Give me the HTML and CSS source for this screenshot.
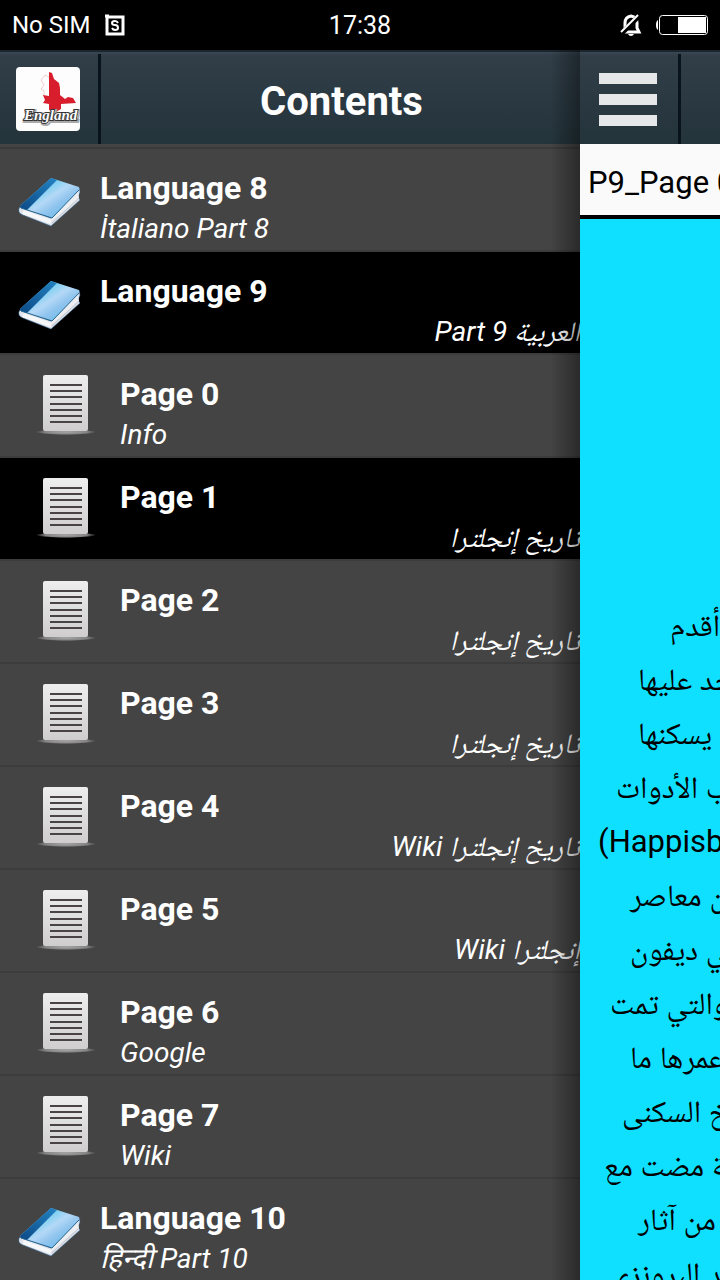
FILE: index.html
```html
<!DOCTYPE html>
<html lang="en">
<head>
    <meta charset="utf-8">
    <meta name="viewport" content="width=device-width,initial-scale=1.0">
    <title>Contents</title>
    <link rel="stylesheet" href="styles.css">
</head>
<body>

<!-- icons -->
<svg class="defs" width="0" height="0" aria-hidden="true">
    <defs>
        <linearGradient id="cover" x1="0" y1="0" x2="1" y2="1">
            <stop offset="0.1" stop-color="#3fa9e0"/>
            <stop offset="0.35" stop-color="#7fd0f2"/>
            <stop offset="0.5" stop-color="#b4d8f6"/>
            <stop offset="0.65" stop-color="#8fc4ee"/>
            <stop offset="1" stop-color="#4fb4e6"/>
        </linearGradient>
        <linearGradient id="spine" x1="1" y1="0" x2="0" y2="1">
            <stop offset="0" stop-color="#2382c2"/>
            <stop offset="1" stop-color="#0c4a86"/>
        </linearGradient>
        <linearGradient id="paper" x1="0" y1="0" x2="0" y2="1">
            <stop offset="0" stop-color="#eeeeee"/>
            <stop offset="1" stop-color="#cfcdcd"/>
        </linearGradient>
        <radialGradient id="ground">
            <stop offset="0" stop-color="#a8a8a8"/>
            <stop offset="0.7" stop-color="#858585"/>
            <stop offset="1" stop-color="#858585" stop-opacity="0"/>
        </radialGradient>
        <symbol id="book" viewBox="0 0 64 52">
            <path d="M2 31 Q0 33 1 36 Q2 38 5 39 L33 50 L62 24 L60 21 L62 16 L61 11 L33 42Z" fill="#dfe2e8" stroke="#2f6ea3" stroke-opacity="0.5"/>
            <path d="M34 42 L60 14 L61 22 L33 46Z" fill="#eceef2"/>
            <path d="M5 36 L33 46" stroke="#f6f7f9" stroke-width="4" fill="none"/>
            <path d="M34 47 L61 22" stroke="#c2c7d0" stroke-width="1" fill="none"/>
            <path d="M33 2 L61 11 Q60 13 61 14 L34 42 L3 32 Q1 31 3 29Z" fill="url(#cover)"/>
            <path d="M33 2 L39 4 L9 34 L3 32 Q1 31 3 29Z" fill="url(#spine)"/>
            <path d="M3 32 L34 42 L61 14" stroke="#24648f" stroke-width="1" fill="none"/>
        </symbol>
        <symbol id="sheet" viewBox="0 0 60 60">
            <ellipse cx="30" cy="57" rx="30" ry="3" fill="url(#ground)"/>
            <rect x="7" y="0" width="45" height="56" rx="2" fill="url(#paper)"/>
            <path d="M14 10h32M14 16h32M14 22h32M14 29h32M14 35h32M14 41h32M14 47h32" stroke="#4a4345" stroke-width="2"/>
        </symbol>
    </defs>
</svg>

<div class="status">
    <div class="status-left">
        <span>No SIM</span>
        <svg width="20" height="22" viewBox="0 0 20 22">
            <path d="M2 3H18V20H2V1M0 2H4" fill="none" stroke="#fff" stroke-width="3"/>
            <path d="M13 9Q12 7 10 7Q7 7 7 9T10 11T13 14Q13 16 10 16Q8 16 7 14" fill="none" stroke="#fff" stroke-width="2"/>
        </svg>
    </div>
    <time>17:38</time>
    <div class="status-right">
        <svg width="22" height="22" viewBox="0 0 22 22">
            <path d="M5 17V9Q5 3 11 2Q17 3 17 9V14L19 18H3" fill="none" stroke="#fff" stroke-width="3"/>
            <path d="M8 20H14Q13 22 11 22T8 20Z" fill="#fff"/>
            <path d="M2 19L20 1" stroke="#000" stroke-width="5"/>
            <path d="M1 18L18 1" stroke="#fff" stroke-width="2"/>
        </svg>
        <svg width="52" height="20" viewBox="0 0 52 20">
            <path d="M2 5Q0 6 0 10T2 15Z" fill="#fff"/>
            <rect x="3.500" y="0.500" width="48" height="19" rx="3" fill="none" stroke="#fff"/>
            <rect x="22" y="2" width="28" height="16" fill="#fff"/>
        </svg>
    </div>
</div>

<div class="screen">
    <nav class="drawer">
        <div class="bar">
            <button class="bar-btn" type="button" aria-label="England">
                <svg width="64" height="64" viewBox="0 0 64 64">
                    <rect width="64" height="64" rx="4" fill="#fdfdfd"/>
                    <path d="M33 10L29 8L25 13L28 18L25 22L28 24V29" fill="none" stroke="#f3cdcd"/>
                    <path d="M33 5L36 6L38 12L43 16L44 21V28L49 32L52 30L57 31L60 36L45 37V42L40 45L33 43V37L27 36L29 33L27 28L33 29Z" fill="#d81e2c"/>
                    <text class="logo-shadow" x="9" y="54">England</text>
                    <text class="logo-text" x="8" y="53">England</text>
                </svg>
            </button>
            <h1>Contents</h1>
        </div>
        <ul class="list">
            <li><a href="#">
                <svg class="book"><use href="#book"/></svg>
                <span class="txt"><b>Language 8</b><i>İtaliano Part 8</i></span>
            </a></li>
            <li class="on"><a href="#">
                <svg class="book"><use href="#book"/></svg>
                <span class="txt"><b>Language 9</b><i dir="rtl">العربية Part 9</i></span>
            </a></li>
            <li class="page"><a href="#">
                <svg class="sheet"><use href="#sheet"/></svg>
                <span class="txt"><b>Page 0</b><i>Info</i></span>
            </a></li>
            <li class="page on"><a href="#">
                <svg class="sheet"><use href="#sheet"/></svg>
                <span class="txt"><b>Page 1</b><i dir="rtl">تاريخ إنجلترا</i></span>
            </a></li>
            <li class="page"><a href="#">
                <svg class="sheet"><use href="#sheet"/></svg>
                <span class="txt"><b>Page 2</b><i dir="rtl">تاريخ إنجلترا</i></span>
            </a></li>
            <li class="page"><a href="#">
                <svg class="sheet"><use href="#sheet"/></svg>
                <span class="txt"><b>Page 3</b><i dir="rtl">تاريخ إنجلترا</i></span>
            </a></li>
            <li class="page"><a href="#">
                <svg class="sheet"><use href="#sheet"/></svg>
                <span class="txt"><b>Page 4</b><i dir="rtl">تاريخ إنجلترا Wiki</i></span>
            </a></li>
            <li class="page"><a href="#">
                <svg class="sheet"><use href="#sheet"/></svg>
                <span class="txt"><b>Page 5</b><i dir="rtl">إنجلترا Wiki</i></span>
            </a></li>
            <li class="page"><a href="#">
                <svg class="sheet"><use href="#sheet"/></svg>
                <span class="txt"><b>Page 6</b><i>Google</i></span>
            </a></li>
            <li class="page"><a href="#">
                <svg class="sheet"><use href="#sheet"/></svg>
                <span class="txt"><b>Page 7</b><i>Wiki</i></span>
            </a></li>
            <li><a href="#">
                <svg class="book"><use href="#book"/></svg>
                <span class="txt"><b>Language 10</b><i>हिन्दी Part 10</i></span>
            </a></li>
        </ul>
        <div class="shade"></div>
    </nav>

    <main class="content">
        <div class="bar">
            <button class="bar-btn menu" type="button" aria-label="Menu">
                <span></span><span></span><span></span>
            </button>
        </div>
        <h2>P9_Page 0</h2>
        <div class="article" lang="ar">
            <p class="in-8"><span dir="rtl">أقدم</span></p>
            <p class="in-7"><span dir="rtl">يوجد عليها</span></p>
            <p class="in-7"><span dir="rtl">يسكنها</span></p>
            <p class="in-4"><span dir="rtl">ب الأدوات</span></p>
            <p class="in-1"><span dir="rtl">Happisburgh)</span></p>
            <p class="in-6"><span dir="rtl">من معاصر</span></p>
            <p class="in-6"><span dir="rtl">في ديفون</span></p>
            <p class="in-3"><span dir="rtl">والتي تمت</span></p>
            <p class="in-6"><span dir="rtl">عمرها ما</span></p>
            <p class="in-5"><span dir="rtl">تاريخ السكنى</span></p>
            <p class="in-2"><span dir="rtl">سنة مضت مع</span></p>
            <p class="in-7"><span dir="rtl">من آثار</span></p>
            <p class="in-3"><span dir="rtl">العهد البرونزي</span></p>
        </div>
    </main>
</div>

</body>
</html>
```
FILE: styles.css
```css
*{
    margin: 0;
    padding: 0;
    box-sizing: border-box;
}
body{
    display: flex;
    flex-direction: column;
    height: 100vh;
    overflow: hidden;
    background: #000;
    color: #fff;
    font-family: Roboto, "Noto Naskh Arabic", "DejaVu Sans", sans-serif;
}
ul{
    list-style: none;
}
a{
    color: inherit;
    text-decoration: none;
}
button{
    border: 0;
    background: none;
    cursor: pointer;
}
.defs{
    position: absolute;
}

/* status bar */
.status{
    flex: none;
    display: grid;
    grid-template-columns: 1fr auto 1fr;
    align-items: center;
    height: 50px;
    padding: 0 12px;
    font-size: 25px;
}
.status-left,.status-right{
    display: flex;
    align-items: center;
    gap: 14px;
}
.status-left{
    font-size: 24px;
}
.status-right{
    justify-content: flex-end;
}

.screen{
    flex: 1;
    display: flex;
    min-height: 0;
}

/* title bars */
.bar{
    flex: none;
    display: flex;
    height: 94px;
    border-top: 2px solid #1c262e;
    background: linear-gradient(to bottom, #3a4853 0, #313e48 4px, #24343b 100%);
}
.bar-btn{
    display: flex;
    align-items: center;
    justify-content: center;
    width: 101px;
    margin-top: 2px;
    padding-right: 2px;
    border-right: 3px solid #09131b;
}
.bar h1{
    flex: 1;
    padding-left: 2px;
    font-size: 40px;
    line-height: 100px;
    text-align: center;
}
.logo-text,.logo-shadow{
    font: italic bold 15px "Liberation Serif", serif;
    fill: #fff;
    stroke: #333;
    stroke-width: 2px;
    paint-order: stroke;
}
.logo-shadow{
    stroke: #aaa;
    stroke-width: 4px;
}
.menu{
    flex-direction: column;
    gap: 10px;
}
.menu span{
    width: 58px;
    height: 11px;
    background: #e6e7e8;
}

/* drawer */
.drawer{
    position: relative;
    flex: 1;
    display: flex;
    flex-direction: column;
    min-width: 0;
    overflow: hidden;
    background: #444;
}
.list{
    margin-top: 3px;
    border-top: 2px solid #3a3a3a;
}
.list li{
    height: 103px;
    border-bottom: 2px solid #3c3c3c;
}
.list li.on{
    background: #000;
}
.list a{
    display: flex;
    height: 100%;
    padding: 19px 0 0 18px;
}
.list svg{
    flex: none;
}
.book{
    width: 64px;
    height: 52px;
    margin: 8px 18px 0 0;
}
.page a{
    padding-left: 36px;
}
.sheet{
    width: 60px;
    height: 60px;
    margin: 1px 24px 0 0;
}
.txt{
    flex: 1;
}
.txt b,.txt i{
    display: block;
    height: 40px;
    white-space: nowrap;
}
.txt b{
    font-size: 32px;
    line-height: 40px;
}
.txt i{
    font-size: 28px;
    line-height: 42px;
}
.shade{
    position: absolute;
    top: 0;
    right: 0;
    bottom: 0;
    width: 30px;
    background: linear-gradient(to right, rgba(0,0,0,0), rgba(0,0,0,0.38));
}

/* page under the drawer */
.content{
    flex: none;
    display: flex;
    flex-direction: column;
    width: 140px;
    overflow: hidden;
    background: #10e0ff;
    color: #000;
}
.content h2{
    flex: none;
    height: 75px;
    padding-left: 8px;
    border-bottom: 4px solid #000;
    background: #fafafa;
    font-size: 31px;
    font-weight: normal;
    line-height: 78px;
    white-space: nowrap;
}
.article{
    padding-top: 382px;
}
.article p{
    display: flex;
    height: 54px;
    font-size: 31px;
    line-height: 50px;
    white-space: nowrap;
}
.in-1{ padding-left: 18px; }
.in-2{ padding-left: 24px; }
.in-3{ padding-left: 30px; }
.in-4{ padding-left: 36px; }
.in-5{ padding-left: 42px; }
.in-6{ padding-left: 50px; }
.in-7{ padding-left: 58px; }
.in-8{ padding-left: 90px; }
```
